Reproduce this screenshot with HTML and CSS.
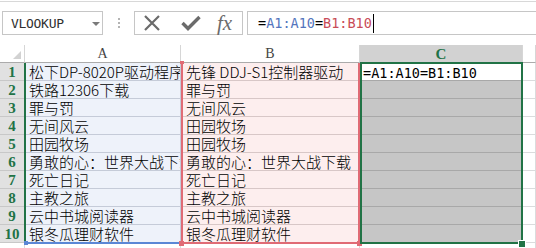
FILE: index.html
```html
<!DOCTYPE html>
<html>
<head>
<meta charset="utf-8">
<link rel="stylesheet" href="styles.css">
</head>
<body>
<div class="toolbar">
  <div class="namebox"><span class="nb-text">VLOOKUP</span><span class="caret"></span></div>
  <div class="grip"><i></i><i></i><i></i></div>
  <div class="fbtns">
    <svg class="ico-x" width="18" height="16" viewBox="0 0 18 16"><path d="M2 1 L16 15 M16 1 L2 15" stroke="#6b6b6b" stroke-width="2.2" fill="none"/></svg>
    <svg class="ico-ok" width="20" height="16" viewBox="0 0 20 16"><path d="M1.5 8 L7 13.5 L18.5 2" stroke="#6b6b6b" stroke-width="3.4" fill="none"/></svg>
    <span class="fx">fx</span>
  </div>
  <div class="fbar"><span>=</span><span class="ref-a">A1:A10</span><span>=</span><span class="ref-b">B1:B10</span><span class="cursor"></span></div>
</div>
<div class="sheet">
  <div class="row hdr">
    <div class="cell corner"><span class="tri"></span></div>
    <div class="cell ch">A</div>
    <div class="cell ch">B</div>
    <div class="cell ch ch-sel">C</div>
    <div class="cell ch"></div>
  </div>
  <div class="row"><div class="cell rh">1</div><div class="cell ca">松下DP-8020P驱动程序</div><div class="cell cb">先锋 DDJ-S1控制器驱动</div><div class="cell cc active"><span class="mono">=A1:A10=B1:B10</span></div><div class="cell cd"></div></div>
  <div class="row"><div class="cell rh">2</div><div class="cell ca">铁路12306下载</div><div class="cell cb">罪与罚</div><div class="cell cc"></div><div class="cell cd"></div></div>
  <div class="row"><div class="cell rh">3</div><div class="cell ca">罪与罚</div><div class="cell cb">无间风云</div><div class="cell cc"></div><div class="cell cd"></div></div>
  <div class="row"><div class="cell rh">4</div><div class="cell ca">无间风云</div><div class="cell cb">田园牧场</div><div class="cell cc"></div><div class="cell cd"></div></div>
  <div class="row"><div class="cell rh">5</div><div class="cell ca">田园牧场</div><div class="cell cb">田园牧场</div><div class="cell cc"></div><div class="cell cd"></div></div>
  <div class="row"><div class="cell rh">6</div><div class="cell ca">勇敢的心：世界大战下载</div><div class="cell cb">勇敢的心：世界大战下载</div><div class="cell cc"></div><div class="cell cd"></div></div>
  <div class="row"><div class="cell rh">7</div><div class="cell ca">死亡日记</div><div class="cell cb">死亡日记</div><div class="cell cc"></div><div class="cell cd"></div></div>
  <div class="row"><div class="cell rh">8</div><div class="cell ca">主教之旅</div><div class="cell cb">主教之旅</div><div class="cell cc"></div><div class="cell cd"></div></div>
  <div class="row"><div class="cell rh">9</div><div class="cell ca">云中书城阅读器</div><div class="cell cb">云中书城阅读器</div><div class="cell cc"></div><div class="cell cd"></div></div>
  <div class="row"><div class="cell rh">10</div><div class="cell ca">银冬瓜理财软件</div><div class="cell cb">银冬瓜理财软件</div><div class="cell cc"></div><div class="cell cd"></div></div>
  <div class="row tail"><div class="cell rh-tail"></div><div class="cell"></div><div class="cell"></div><div class="cell"></div><div class="cell"></div></div>

  <div class="ov rh-line"></div>
  <div class="ov a-bottom"></div>
  <div class="ov sq sq-blue"></div>
  <div class="ov b-range"></div>
  <div class="ov sq sq-pink sq-b1"></div>
  <div class="ov sq sq-pink sq-b2"></div>
  <div class="ov sq sq-pink sq-b3"></div>
  <div class="ov c-range"></div>
  <div class="ov fill-handle"></div>
</div>
</body>
</html>
```
FILE: styles.css
```css
html, body {
  margin: 0;
  padding: 0;
  background: #ffffff;
  width: 536px;
  height: 248px;
  overflow: hidden;
}
body {
  font-family: "Noto Sans CJK SC", "Noto Sans", sans-serif;
}

.toolbar {
  height: 44px;
  box-sizing: border-box;
  border-top: 1px solid #d8d8d8;
  margin-top: 1px;
  padding-top: 9px;
  display: flex;
  align-items: flex-start;
}
.namebox {
  margin-left: 2px;
  width: 101px;
  height: 24px;
  box-sizing: border-box;
  border: 1px solid #c6c6c6;
  display: flex;
  align-items: center;
  padding-left: 8px;
  position: relative;
}
.nb-text {
  font-family: "DejaVu Sans Mono", monospace;
  font-size: 13px;
  color: #303030;
  letter-spacing: -0.3px;
}
.caret {
  position: absolute;
  left: 89px;
  top: 10px;
  width: 0;
  height: 0;
  border-left: 4px solid transparent;
  border-right: 4px solid transparent;
  border-top: 4px solid #7a7a7a;
}
.grip {
  width: 31px;
  height: 24px;
  display: flex;
  flex-direction: column;
  align-items: center;
  justify-content: center;
  gap: 2px;
}
.grip i {
  display: block;
  width: 2px;
  height: 2px;
  background: #b4b4b4;
}
.fbtns {
  width: 109px;
  height: 24px;
  box-sizing: border-box;
  border: 1px solid #c6c6c6;
  display: flex;
  align-items: center;
  padding-left: 8px;
}
.ico-x { margin-right: 20px; }
.ico-ok { margin-right: 16px; }
.fx {
  font-family: "Liberation Serif", serif;
  font-style: italic;
  font-size: 21px;
  color: #6b6b6b;
  line-height: 20px;
  margin-top: -1px;
}
.fbar {
  margin-left: 4px;
  flex: 1;
  height: 24px;
  box-sizing: border-box;
  border: 1px solid #c6c6c6;
  border-right: none;
  display: flex;
  align-items: center;
  padding-left: 10px;
  font-family: "DejaVu Sans Mono", monospace;
  font-size: 13.5px;
  color: #000;
}
.ref-a { color: #5475bd; }
.ref-b { color: #c94c58; }
.cursor {
  display: inline-block;
  width: 1px;
  height: 19px;
  background: #000;
  margin-left: 1px;
}

.sheet {
  position: relative;
}
.row {
  display: grid;
  grid-template-columns: 25px 156px 179px 163px 1fr;
  height: 18px;
}
.row.tail { height: 8px; }
.cell {
  box-sizing: border-box;
  border-right: 1px solid #dadcdd;
  border-bottom: 1px solid #dadcdd;
  white-space: nowrap;
  overflow: hidden;
  font-size: 15px;
  font-weight: 300;
  line-height: 17px;
  color: #000;
  padding-left: 4px;
}
.hdr .cell {
  background: #ffffff;
  border-right-color: #d6d6d6;
  border-bottom-color: #ababab;
  text-align: center;
  padding-left: 0;
  font-family: "Liberation Serif", serif;
  font-weight: normal;
  font-size: 14px;
  line-height: 18px;
  color: #444;
}
.corner {
  position: relative;
}
.tri {
  position: absolute;
  right: 3px;
  bottom: 3px;
  width: 0;
  height: 0;
  border-left: 8px solid transparent;
  border-bottom: 8px solid #d2d2d2;
}
.hdr .ch-sel {
  background: #d2d2d2;
  color: #217346;
  font-weight: bold;
  font-size: 15px;
}
.rh {
  background: #e1e1e1;
  border-right-color: #c0c0c0;
  border-bottom-color: #c8c8c8;
  color: #217346;
  font-family: "Liberation Serif", serif;
  font-weight: bold;
  font-size: 15px;
  text-align: center;
  padding-left: 0;
  line-height: 18px;
}
.rh-tail { background: #ffffff; }
.ca {
  background: #eef2fa;
  border-bottom-color: #c5cbd8;
  border-right-color: #c5cbd8;
}
.cb {
  background: #fdeeee;
  border-bottom-color: #d8c7c7;
  border-right-color: #d8c7c7;
  padding-left: 5px;
}
.cc {
  background: #c6c6c6;
  border-bottom-color: #a8a8a8;
  border-right-color: #a8a8a8;
}
.cc.active {
  background: #ffffff;
  padding-left: 3px;
}
.mono {
  font-family: "DejaVu Sans Mono", monospace;
  font-weight: normal;
  font-size: 13.5px;
}

.ov { position: absolute; }
.rh-line {
  left: 24px;
  top: 18px;
  width: 2px;
  height: 180px;
  background: #217346;
}
.a-bottom {
  left: 26px;
  top: 197px;
  width: 155px;
  height: 2px;
  background: #5b87d5;
}
.sq { width: 4px; height: 4px; }
.sq-blue { left: 24px; top: 196px; background: #5b87d5; }
.b-range {
  left: 181px;
  top: 18px;
  width: 179px;
  height: 181px;
  box-sizing: border-box;
  border: 2px solid #e06b75;
  border-top: none;
}
.sq-pink { background: #e06b75; width: 5px; height: 5px; }
.sq-b1 { left: 180px; top: 16px; width: 4px; height: 3px; }
.sq-b2 { left: 179px; top: 196px; }
.sq-b3 { left: 357px; top: 196px; }
.c-range {
  left: 360px;
  top: 17px;
  width: 163px;
  height: 182px;
  box-sizing: border-box;
  border: 2px solid #217346;
}
.fill-handle {
  left: 518px;
  top: 195px;
  width: 6px;
  height: 6px;
  background: #217346;
  border: 1px solid #ffffff;
}
```
